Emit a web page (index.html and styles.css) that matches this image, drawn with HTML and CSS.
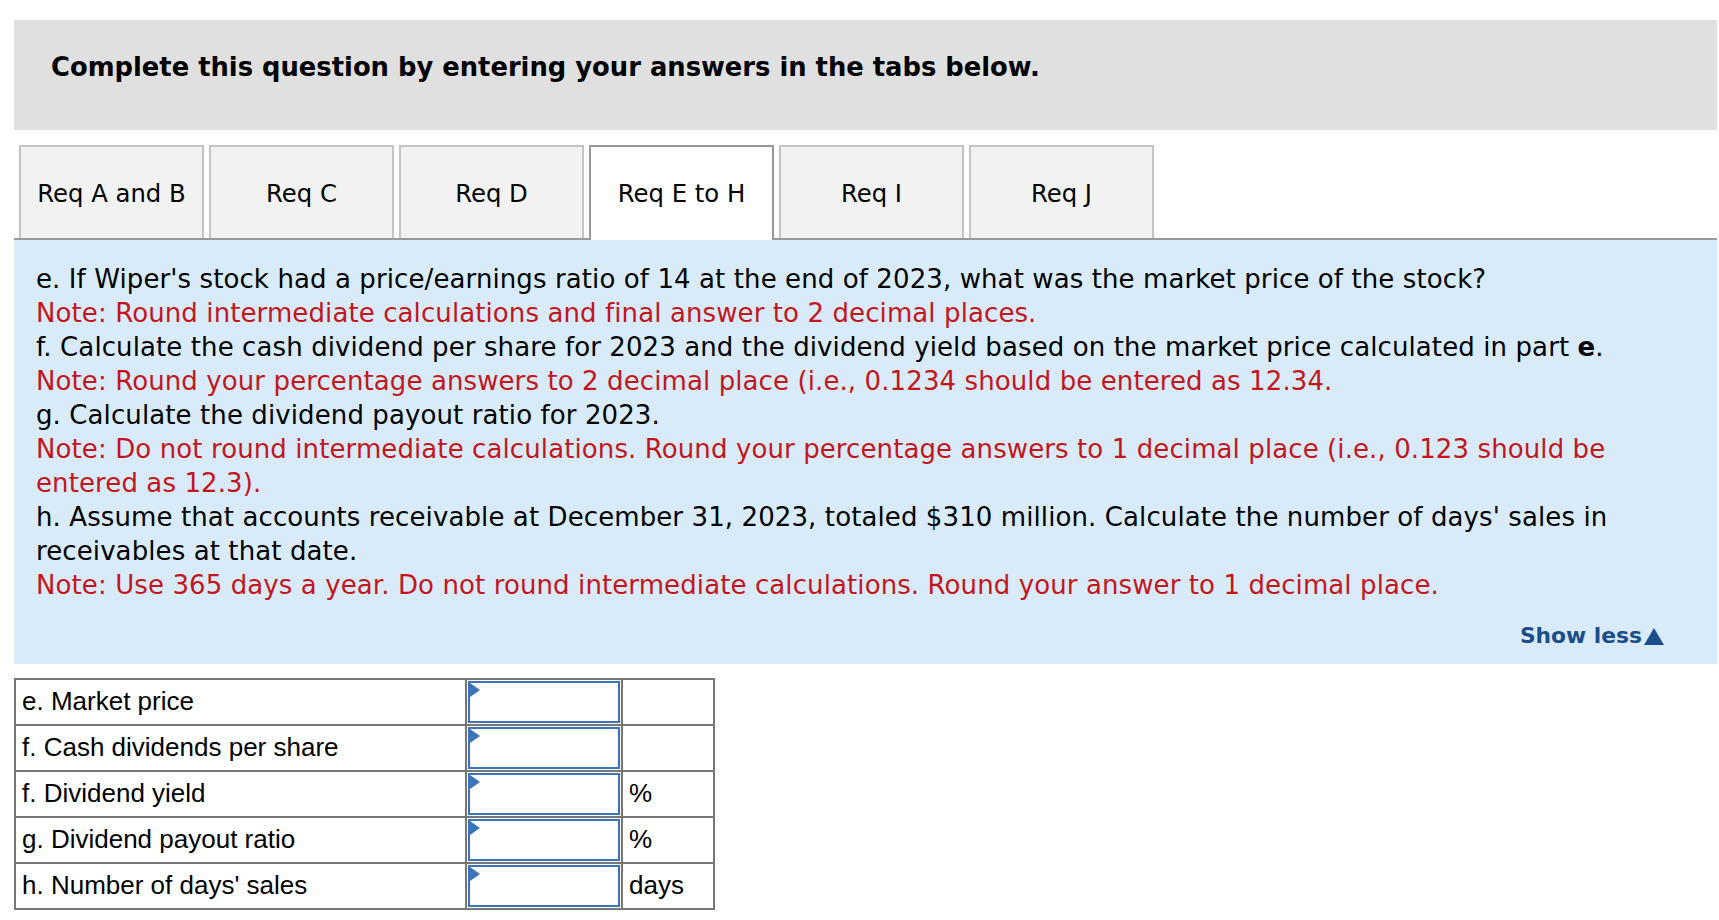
FILE: index.html
```html
<!DOCTYPE html>
<html lang="en">
<head>
<meta charset="utf-8">
<title>Req E to H</title>
<link rel="stylesheet" href="styles.css">
</head>
<body>
<div class="page">
  <div class="header">
    <h2 class="heading">Complete this question by entering your answers in the tabs below.</h2>
  </div>

  <div class="tabs">
    <div class="tab">Req A and B</div>
    <div class="tab">Req C</div>
    <div class="tab">Req D</div>
    <div class="tab active">Req E to H</div>
    <div class="tab">Req I</div>
    <div class="tab">Req J</div>
  </div>

  <div class="panel">
    <p class="line">e. If Wiper's stock had a price/earnings ratio of 14 at the end of 2023, what was the market price of the stock?</p>
    <p class="line note">Note: Round intermediate calculations and final answer to 2 decimal places.</p>
    <p class="line">f. Calculate the cash dividend per share for 2023 and the dividend yield based on the market price calculated in part <b>e</b>.</p>
    <p class="line note">Note: Round your percentage answers to 2 decimal place (i.e., 0.1234 should be entered as 12.34.</p>
    <p class="line">g. Calculate the dividend payout ratio for 2023.</p>
    <p class="line note">Note: Do not round intermediate calculations. Round your percentage answers to 1 decimal place (i.e., 0.123 should be entered as 12.3).</p>
    <p class="line">h. Assume that accounts receivable at December 31, 2023, totaled $310 million. Calculate the number of days' sales in receivables at that date.</p>
    <p class="line note">Note: Use 365 days a year. Do not round intermediate calculations. Round your answer to 1 decimal place.</p>
    <div class="more"><span class="show-less">Show less<span class="arrow"></span></span></div>
  </div>

  <table class="answers">
    <tr>
      <td class="label">e. Market price</td>
      <td class="input-cell"><div class="input"><span class="flag"></span></div></td>
      <td class="unit"></td>
    </tr>
    <tr>
      <td class="label">f. Cash dividends per share</td>
      <td class="input-cell"><div class="input"><span class="flag"></span></div></td>
      <td class="unit"></td>
    </tr>
    <tr>
      <td class="label">f. Dividend yield</td>
      <td class="input-cell"><div class="input"><span class="flag"></span></div></td>
      <td class="unit">%</td>
    </tr>
    <tr>
      <td class="label">g. Dividend payout ratio</td>
      <td class="input-cell"><div class="input"><span class="flag"></span></div></td>
      <td class="unit">%</td>
    </tr>
    <tr>
      <td class="label">h. Number of days' sales</td>
      <td class="input-cell"><div class="input"><span class="flag"></span></div></td>
      <td class="unit">days</td>
    </tr>
  </table>
</div>
</body>
</html>
```
FILE: styles.css
```css
html, body {
  margin: 0;
  padding: 0;
  background: #ffffff;
}

.page {
  padding: 20px 2px 0 14px;
  font-family: "DejaVu Sans", Verdana, sans-serif;
  color: #000;
}

.header {
  background: #e0e0e0;
  height: 110px;
  box-sizing: border-box;
  padding: 32px 0 0 37px;
}

.heading {
  margin: 0;
  font-size: 25.8px;
  font-weight: bold;
  line-height: 30px;
}

.tabs {
  display: flex;
  gap: 5px;
  margin-top: 15px;
  padding-left: 5px;
  border-bottom: 2px solid #999999;
  height: 93px;
}

.tab {
  width: 185px;
  box-sizing: border-box;
  height: 93px;
  border: 2px solid #c4c4c4;
  border-bottom: none;
  background: #f2f2f2;
  display: flex;
  align-items: center;
  justify-content: center;
  font-size: 24.3px;
  padding-top: 2px;
}

.tab.active {
  background: #ffffff;
  border-color: #999999;
  height: 95px;
  margin-bottom: -2px;
  padding-bottom: 2px;
  position: relative;
}

.panel {
  background: #d9ebf9;
  height: 424px;
  box-sizing: border-box;
  padding: 22px 22px 0 22px;
}

.line {
  margin: 0;
  font-size: 26px;
  letter-spacing: 0.1px;
  line-height: 34px;
}

.note {
  color: #c3161c;
}

.more {
  display: flex;
  justify-content: flex-end;
  margin-top: 21px;
  padding-right: 31px;
}

.show-less {
  display: inline-flex;
  align-items: center;
  font-weight: bold;
  color: #1a4e8a;
  font-size: 21.8px;
  line-height: 26px;
}

.arrow {
  width: 0;
  height: 0;
  margin-left: 2px;
  border-left: 10px solid transparent;
  border-right: 10px solid transparent;
  border-bottom: 17px solid #1a4e8a;
}

.answers {
  margin-top: 14px;
  border-collapse: collapse;
  font-family: "Liberation Sans", Arial, sans-serif;
  font-size: 26px;
}

.answers td {
  border: 2px solid #777777;
  height: 42px;
  padding: 0;
  line-height: 28px;
}

.label {
  width: 443px;
  padding-left: 6px !important;
  padding-bottom: 2px !important;
}

.input-cell {
  width: 152px;
  padding: 1px !important;
}

.unit {
  width: 84px;
  padding-left: 6px !important;
  padding-bottom: 2px !important;
}

.input {
  height: 42px;
  box-sizing: border-box;
  border: 2px solid #3b74b9;
  background: #fff;
  position: relative;
}

.flag {
  position: absolute;
  left: 0;
  top: 0;
  width: 0;
  height: 0;
  border-top: 7px solid transparent;
  border-bottom: 7px solid transparent;
  border-left: 10px solid #3b74b9;
}
```
